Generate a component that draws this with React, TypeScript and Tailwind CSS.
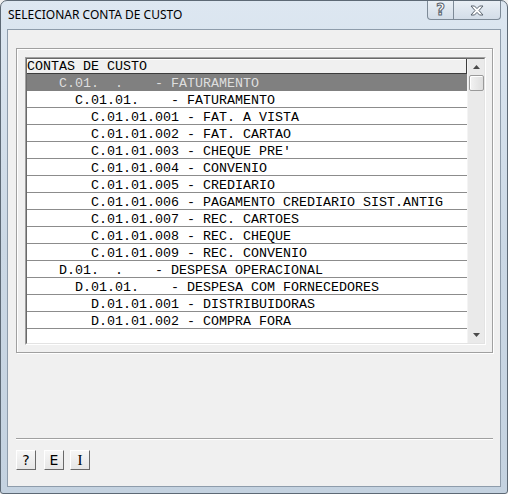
import React from "react";

const rows: { t: string; sel?: boolean }[] = [
  { t: "    C.01.  .    - FATURAMENTO", sel: true },
  { t: "      C.01.01.    - FATURAMENTO" },
  { t: "        C.01.01.001 - FAT. A VISTA" },
  { t: "        C.01.01.002 - FAT. CARTAO" },
  { t: "        C.01.01.003 - CHEQUE PRE'" },
  { t: "        C.01.01.004 - CONVENIO" },
  { t: "        C.01.01.005 - CREDIARIO" },
  { t: "        C.01.01.006 - PAGAMENTO CREDIARIO SIST.ANTIG" },
  { t: "        C.01.01.007 - REC. CARTOES" },
  { t: "        C.01.01.008 - REC. CHEQUE" },
  { t: "        C.01.01.009 - REC. CONVENIO" },
  { t: "    D.01.  .    - DESPESA OPERACIONAL" },
  { t: "      D.01.01.    - DESPESA COM FORNECEDORES" },
  { t: "        D.01.01.001 - DISTRIBUIDORAS" },
  { t: "        D.01.01.002 - COMPRA FORA" },
];

const mono = { fontFamily: '"Liberation Mono", "Courier New", monospace' };

function Btn({ label, className = "", font }: { label: string; className?: string; font?: string }) {
  return (
    <div
      className={`w-[20px] h-[20px] border border-t-white border-l-white border-b-[#696969] border-r-[#696969] bg-gradient-to-b from-[#f6f6f6] to-[#e6e6e6] flex items-center justify-center text-[14px] leading-none text-black ${className}`}
      style={{ fontFamily: font ?? '"DejaVu Sans", Tahoma, sans-serif' }}
    >
      {label}
    </div>
  );
}

export default function App() {
  return (
    <div className="w-[508px] h-[494px] bg-[#f0f0f0]">
      <div className="w-[508px] h-[494px] rounded-t-[7px] rounded-b-[3px] border border-[#5d6975] bg-gradient-to-b from-[#dde7f1] via-[#cbd8e5] to-[#c4d2e0] flex flex-col">
        {/* title bar */}
        <div className="h-[28px] flex items-start justify-between">
          <div
            className="pl-[7px] pt-[6px] text-[12px] leading-[16px] text-black"
            style={{ fontFamily: '"Noto Sans", "Open Sans", sans-serif' }}
          >
            SELECIONAR CONTA DE CUSTO
          </div>
          <div className="flex mr-[6px]">
            <div className="w-[27px] h-[19px] border border-t-0 border-[#7d8a97] rounded-bl-[4px] bg-gradient-to-b from-[#e9eff5] to-[#d3dde8] flex items-center justify-center">
              <span
                className="text-[15px] font-bold leading-none text-white [-webkit-text-stroke:1px_#59636e]"
                style={{ fontFamily: '"DejaVu Sans", sans-serif' }}
              >
                ?
              </span>
            </div>
            <div className="w-[47px] h-[19px] border border-t-0 border-l-0 border-[#7d8a97] rounded-br-[4px] bg-gradient-to-b from-[#e9eff5] to-[#d3dde8] flex items-center justify-center">
              <svg width="14" height="11" viewBox="0 0 14 11">
                <path
                  d="M1 1 L4.5 1 L7 3.6 L9.5 1 L13 1 L9 5.5 L13 10 L9.5 10 L7 7.4 L4.5 10 L1 10 L5 5.5 Z"
                  fill="#ffffff"
                  stroke="#59636e"
                  strokeWidth="1"
                  strokeLinejoin="round"
                />
              </svg>
            </div>
          </div>
        </div>
        {/* client */}
        <div className="flex-1 mx-[6px] mb-[6px] border border-[#8e9cab] bg-[#f0f0f0] flex flex-col pl-[8px] pt-[18px]">
          {/* group box */}
          <div className="w-[477px] h-[305px] border border-[#a0a0a0] shadow-[inset_1px_1px_0_#ffffff,1px_1px_0_#ffffff] pl-[8px] pt-[8px]">
            {/* listbox */}
            <div className="w-[461px] h-[288px] border border-t-[#a0a0a0] border-l-[#a0a0a0] border-b-white border-r-white">
              <div className="w-full h-full border border-t-[#696969] border-l-[#696969] border-b-[#e3e3e3] border-r-[#e3e3e3] bg-white flex">
                <div className="w-[440px] flex flex-col" style={mono}>
                  <div className="h-[15px] pt-[1px] bg-[#f0f0f0] border-b border-r border-[#3c3c3c] shadow-[inset_1px_1px_0_#ffffff] text-[13.33px] leading-[14px] text-black whitespace-pre">
                    CONTAS DE CUSTO
                  </div>
                  {rows.map((r, i) => (
                    <div
                      key={i}
                      className={`h-[17px] pt-[1px] border-b text-[13.33px] leading-[17px] whitespace-pre ${
                        r.sel
                          ? "bg-[#808080] border-[#808080] text-[#dedede]"
                          : "bg-white border-[#8c8c8c] text-black"
                      }`}
                    >
                      {r.t}
                    </div>
                  ))}
                </div>
                {/* scrollbar */}
                <div className="w-[17px] bg-[#eaeaea] border-l border-[#f4f4f4] flex flex-col items-center justify-between">
                  <div className="w-full">
                    <div className="h-[16px] flex items-center justify-center">
                      <svg width="7" height="4" viewBox="0 0 7 4">
                        <path d="M3.5 0 L7 4 L0 4 Z" fill="#4a4a4a" />
                      </svg>
                    </div>
                    <div className="mx-auto w-[15px] h-[16px] rounded-[2px] border border-[#9a9a9a] bg-gradient-to-r from-[#f3f3f3] to-[#dedede] shadow-[inset_1px_1px_0_#ffffff]" />
                  </div>
                  <div className="h-[17px] flex items-center justify-center">
                    <svg width="7" height="4" viewBox="0 0 7 4">
                      <path d="M0 0 L7 0 L3.5 4 Z" fill="#4a4a4a" />
                    </svg>
                  </div>
                </div>
              </div>
            </div>
          </div>
          {/* separator */}
          <div className="mt-[85px] w-[477px] h-[2px] border-t border-[#a0a0a0] border-b border-b-white" />
          {/* buttons */}
          <div className="mt-[10px] flex">
            <Btn label="?" />
            <Btn label="E" className="ml-[8px]" />
            <Btn label="I" className="ml-[6px] text-[15px]" font='"Liberation Serif", serif' />
          </div>
        </div>
      </div>
    </div>
  );
}
